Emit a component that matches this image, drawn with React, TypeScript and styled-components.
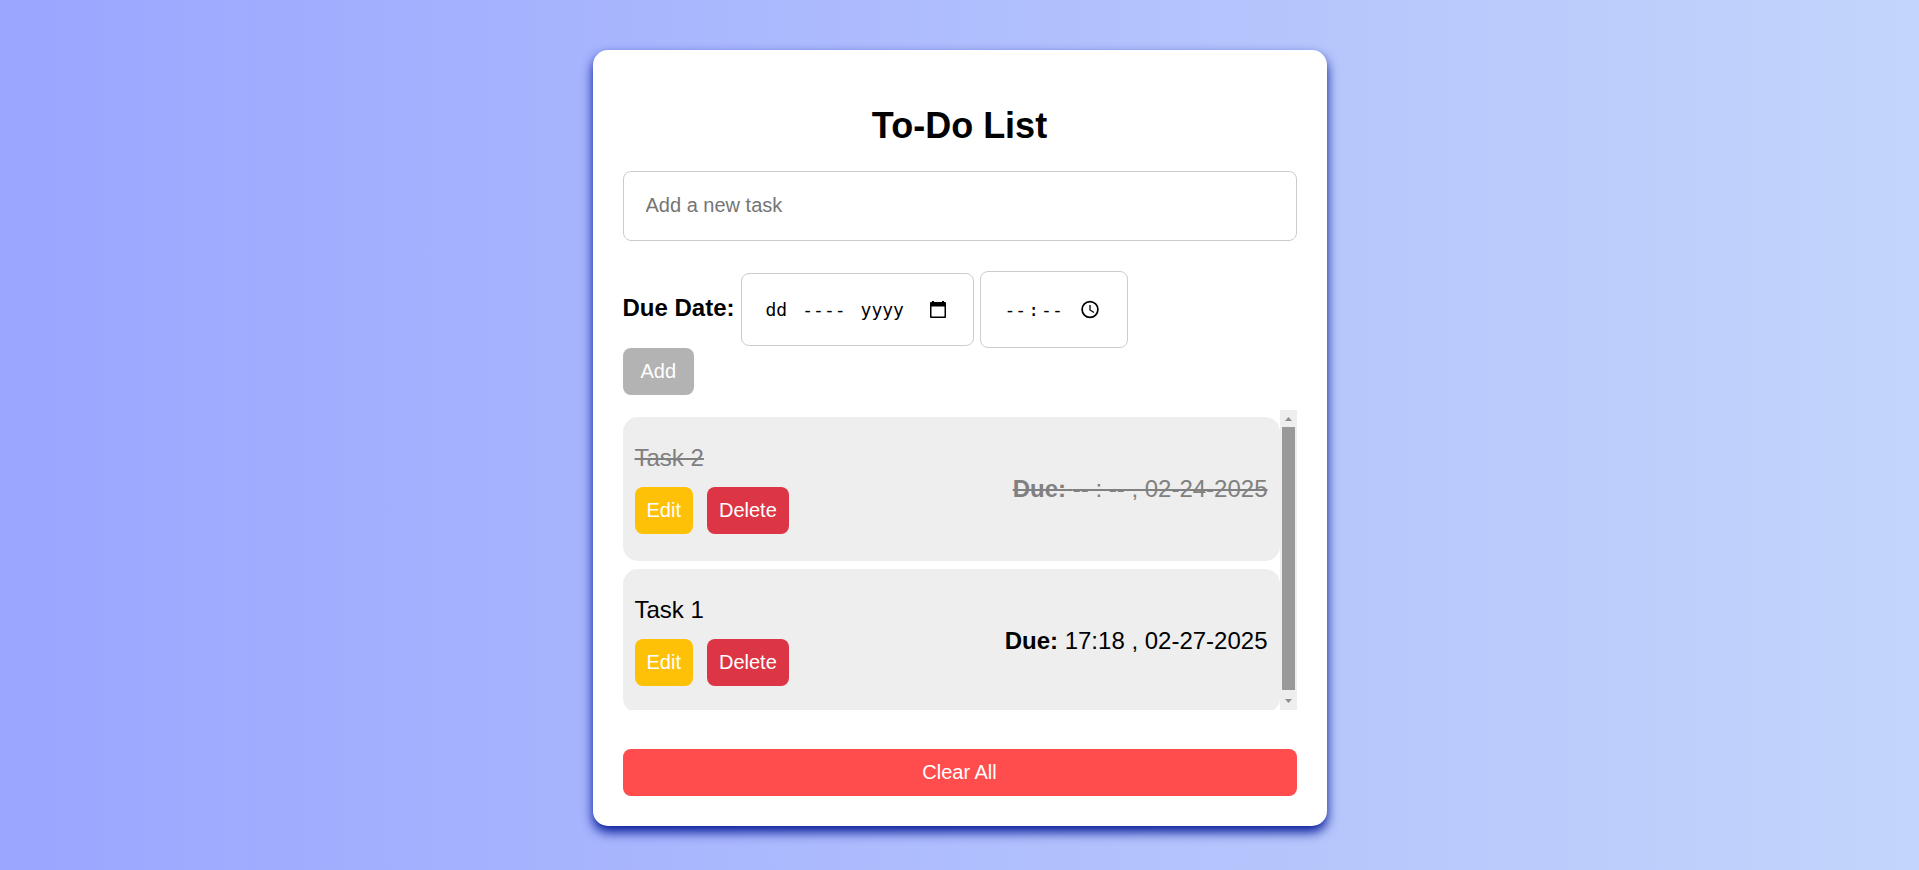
import React from 'react';
import styled, { createGlobalStyle } from 'styled-components';

const GlobalStyle = createGlobalStyle`
  * { box-sizing: border-box; }
  body { margin: 0; font-family: Arial, "Liberation Sans", sans-serif; font-size: 24px; line-height: 28px; color: #000; }
`;

const Page = styled.div`
  min-height: 100vh;
  padding: 50px 24px 44px;
  background: linear-gradient(to right, #9aa6ff, #c3d5fb);
`;

const Card = styled.main`
  max-width: 734px;
  margin: 0 auto;
  padding: 30px;
  border-radius: 15px;
  background: #fff;
  box-shadow: 0 6px 12px #001694;
`;

const Title = styled.h1`
  margin: 25px 0 24px;
  font-size: 36px;
  line-height: 42px;
  text-align: center;
`;

const TaskInput = styled.input`
  display: block;
  width: 100%;
  padding: 22px 22px 23px;
  border: 1px solid #ccc;
  border-radius: 8px;
  font: 20px/23px Arial, "Liberation Sans", sans-serif;
  &::placeholder { color: #757575; }
`;

const DueRow = styled.div`
  display: flex;
  flex-wrap: wrap;
  align-items: center;
  gap: 6px;
  margin-top: 30px;
`;

const DueLabel = styled.label`
  padding-bottom: 3px;
  font-weight: bold;
`;

const Picker = styled.div<{ $width: number; $height: number }>`
  position: relative;
  width: ${(p) => p.$width}px;
  height: ${(p) => p.$height}px;
  font: 18px/24px "DejaVu Sans Mono", monospace;
`;

const PickerInput = styled.input`
  width: 100%;
  height: 100%;
  padding: 0 25px;
  border: 1px solid #ccc;
  border-radius: 8px;
  background: #fff;
  font: inherit;
  &::-webkit-datetime-edit,
  &::-webkit-calendar-picker-indicator { opacity: 0; }
`;

const PickerFace = styled.div<{ $gap: number }>`
  position: absolute;
  inset: 0;
  display: flex;
  align-items: center;
  gap: ${(p) => p.$gap}px;
  padding: 0 27px 0 25px;
  pointer-events: none;
  svg { margin-left: auto; }
`;

const Button = styled.button<{ $color: string; $wide?: boolean; $block?: boolean }>`
  display: ${(p) => (p.$block ? 'block' : 'inline-block')};
  width: ${(p) => (p.$block ? '100%' : 'auto')};
  padding: 12px ${(p) => (p.$wide ? 18 : 12)}px;
  border: none;
  border-radius: 8px;
  background: ${(p) => p.$color};
  color: #fff;
  font: 20px/23px Arial, "Liberation Sans", sans-serif;
  cursor: pointer;
`;

const AddRow = styled.div`
  display: flex;
`;

const ListFrame = styled.div`
  display: flex;
  height: 300px;
  margin: 15px 0 39px;
`;

const List = styled.ul`
  flex: 1;
  margin: 0;
  padding: 7px 0 0;
  list-style: none;
  overflow-y: auto;
  scrollbar-width: none;
`;

const ScrollBar = styled.div`
  display: flex;
  flex-direction: column;
  width: 17px;
  background: #eee;
`;

const ScrollThumb = styled.div`
  flex: 1;
  margin: 0 2px 3px;
  background: #999;
`;

const Item = styled.li`
  display: flex;
  align-items: center;
  justify-content: space-between;
  margin-bottom: 8px;
  padding: 27px 12px;
  border-radius: 15px;
  background: #eee;
  &:last-child { margin-bottom: 0; }
`;

const TaskText = styled.div<{ $done: boolean }>`
  color: ${(p) => (p.$done ? 'gray' : '#000')};
  text-decoration: ${(p) => (p.$done ? 'line-through 2px' : 'none')};
`;

const Actions = styled.div`
  display: flex;
  gap: 14px;
  margin-top: 15px;
`;

const tasks = [
  { name: 'Task 2', due: '-- : -- , 02-24-2025', done: true },
  { name: 'Task 1', due: '17:18 , 02-27-2025', done: false },
];

export default function App() {
  return (
    <>
      <GlobalStyle />
      <Page>
        <Card>
          <Title>To-Do List</Title>
          <TaskInput type="text" placeholder="Add a new task" aria-label="Add a new task" />
          <DueRow>
            <DueLabel htmlFor="due-date">Due Date:</DueLabel>
            <Picker $width={233} $height={73}>
              <PickerInput id="due-date" type="date" />
              <PickerFace $gap={15} aria-hidden="true">
                <span>dd</span><span>----</span><span>yyyy</span>
                <svg width="20" height="20" viewBox="0 0 20 20" fill="#000">
                  <path
                    fillRule="evenodd"
                    d="M5 1h2v1h8V1h2v1h1a1 1 0 0 1 1 1v14a1 1 0 0 1-1 1H4a1 1 0 0 1-1-1V3a1 1 0 0 1 1-1h1zM4.500 6.500v10h13v-10z"
                  />
                </svg>
              </PickerFace>
            </Picker>
            <Picker $width={148} $height={77}>
              <PickerInput id="due-time" type="time" aria-label="Due time" />
              <PickerFace $gap={2} aria-hidden="true">
                <span>--</span><span>:</span><span>--</span>
                <svg width="20" height="20" viewBox="0 0 20 20" fill="none" stroke="#000">
                  <circle cx="9" cy="9.500" r="7.900" strokeWidth="1.700" />
                  <path d="M9 5v5l4 2.500" strokeWidth="1.300" />
                </svg>
              </PickerFace>
            </Picker>
          </DueRow>
          <AddRow><Button type="button" $color="#b3b3b3" $wide>Add</Button></AddRow>
          <ListFrame>
            <List>
              {tasks.map((task) => (
                <Item key={task.name}>
                  <div>
                    <TaskText $done={task.done}>{task.name}</TaskText>
                    <Actions>
                      <Button type="button" $color="#ffc107">Edit</Button>
                      <Button type="button" $color="#dc3545">Delete</Button>
                    </Actions>
                  </div>
                  <TaskText $done={task.done}><strong>Due:</strong> {task.due}</TaskText>
                </Item>
              ))}
            </List>
            <ScrollBar aria-hidden="true">
              <svg width="17" height="17" viewBox="0 0 17 17" fill="#8f8f8f"><path d="M5 11h7L8.500 7z" /></svg>
              <ScrollThumb />
              <svg width="17" height="17" viewBox="0 0 17 17" fill="#8f8f8f"><path d="M5 6h7L8.500 10z" /></svg>
            </ScrollBar>
          </ListFrame>
          <Button type="button" $color="#ff4d4d" $block>Clear All</Button>
        </Card>
      </Page>
    </>
  );
}
